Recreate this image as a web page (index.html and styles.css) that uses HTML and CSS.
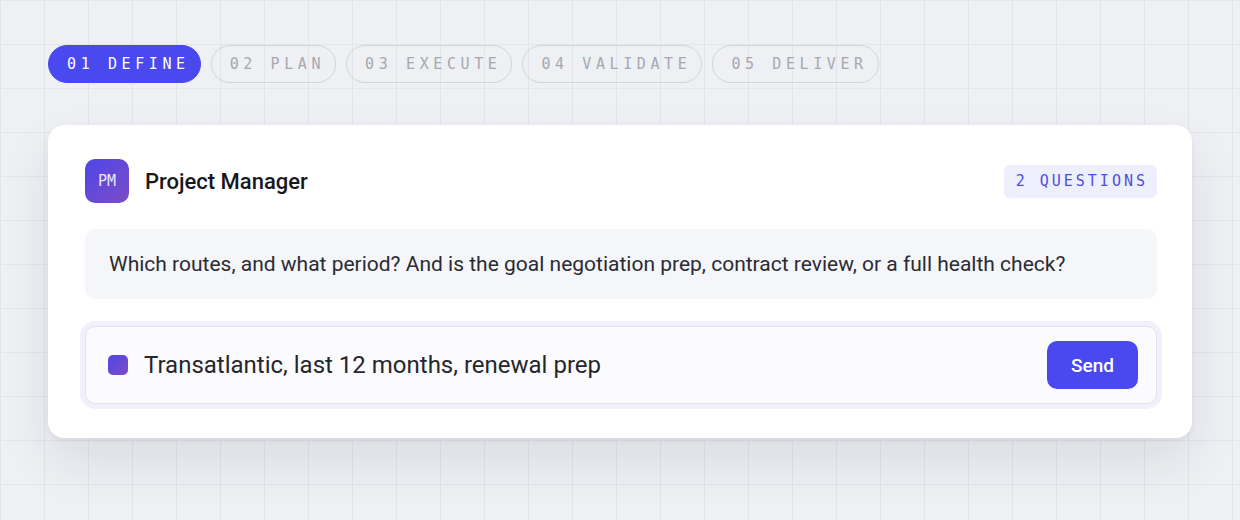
FILE: index.html
```html
<!DOCTYPE html>
<html lang="en">
<head>
  <meta charset="UTF-8" />
  <meta name="viewport" content="width=device-width, initial-scale=1.0"/>
  <title>Define</title>
  <link rel="stylesheet" href="styles.css">
</head>
<body>
  <div class="steps">
    <span class="step active">01 DEFINE</span>
    <span class="step">02 PLAN</span>
    <span class="step">03 EXECUTE</span>
    <span class="step">04 VALIDATE</span>
    <span class="step">05 DELIVER</span>
  </div>

  <div class="card">
    <div class="card-head">
      <div class="avatar">PM</div>
      <div class="name">Project Manager</div>
      <div class="badge">2 QUESTIONS</div>
    </div>

    <div class="question">
      Which routes, and what period? And is the goal negotiation prep, contract review, or a full health check?
    </div>

    <div class="answer">
      <span class="dot"></span>
      <span class="answer-text">Transatlantic, last 12 months, renewal prep</span>
      <button class="send">Send</button>
    </div>
  </div>
</body>
</html>
```

FILE: styles.css
```css
body {
  font-family: Roboto, 'Noto Sans', sans-serif;
  margin: 0;
  padding: 45px 48px;
  background-color: #eef0f4;
  background-image:
    linear-gradient(to right, #e3e5ea 1px, transparent 1px),
    linear-gradient(to bottom, #e3e5ea 1px, transparent 1px);
  background-size: 44px 44px;
  color: #222;
  height: 520px;
  box-sizing: border-box;
  overflow: hidden;
}

.steps {
  display: flex;
  gap: 10px;
}

.step {
  font-family: 'DejaVu Sans Mono', monospace;
  font-size: 15px;
  letter-spacing: 4.6px;
  height: 38px;
  line-height: 36px;
  padding: 0 10px 0 18px;
  border: 1px solid #d3d5da;
  border-radius: 19px;
  color: #a6a8ae;
  box-sizing: border-box;
}

.step.active {
  background: #4a48ef;
  border-color: #4a48ef;
  color: #fff;
}

.card {
  margin-top: 42px;
  background: #fff;
  border-radius: 16px;
  padding: 34px 35px 34px 37px;
  box-shadow: 0 24px 50px rgba(30, 34, 60, 0.09), 0 2px 6px rgba(30, 34, 60, 0.05);
}

.card-head {
  display: flex;
  align-items: center;
  height: 44px;
}

.avatar {
  width: 44px;
  height: 44px;
  border-radius: 10px;
  background: linear-gradient(135deg, #4d46e8, #7d4cc6);
  color: #e9e8ff;
  font-family: 'DejaVu Sans Mono', monospace;
  font-size: 15px;
  display: flex;
  align-items: center;
  justify-content: center;
}

.name {
  margin-left: 16px;
  font-size: 22px;
  font-weight: 500;
  color: #17171c;
  flex: 1;
}

.badge {
  font-family: 'DejaVu Sans Mono', monospace;
  font-size: 15px;
  letter-spacing: 3px;
  color: #514ed6;
  background: #eeeffc;
  border-radius: 6px;
  padding: 0 9px 0 12px;
  height: 33px;
  line-height: 33px;
}

.question {
  margin-top: 26px;
  background: #f5f6f9;
  border-radius: 10px;
  padding: 0 24px;
  height: 70px;
  display: flex;
  align-items: center;
  font-size: 21px;
  color: #2a2b33;
}

.answer {
  margin-top: 27px;
  height: 78px;
  box-sizing: border-box;
  border: 1px solid #e2e2ee;
  border-radius: 10px;
  background: #fbfbfd;
  box-shadow: 0 0 0 5px #f1f1fc;
  display: flex;
  align-items: center;
  padding: 0 18px 0 22px;
}

.dot {
  width: 20px;
  height: 20px;
  border-radius: 5px;
  background: linear-gradient(135deg, #5046e6, #7d4cc6);
}

.answer-text {
  margin-left: 16px;
  font-size: 24px;
  color: #26262d;
  flex: 1;
}

.send {
  font-family: Roboto, sans-serif;
  background: #4a48ef;
  color: #fff;
  border: none;
  border-radius: 10px;
  width: 91px;
  height: 48px;
  font-size: 19px;
  font-weight: 500;
  cursor: pointer;
}
```
